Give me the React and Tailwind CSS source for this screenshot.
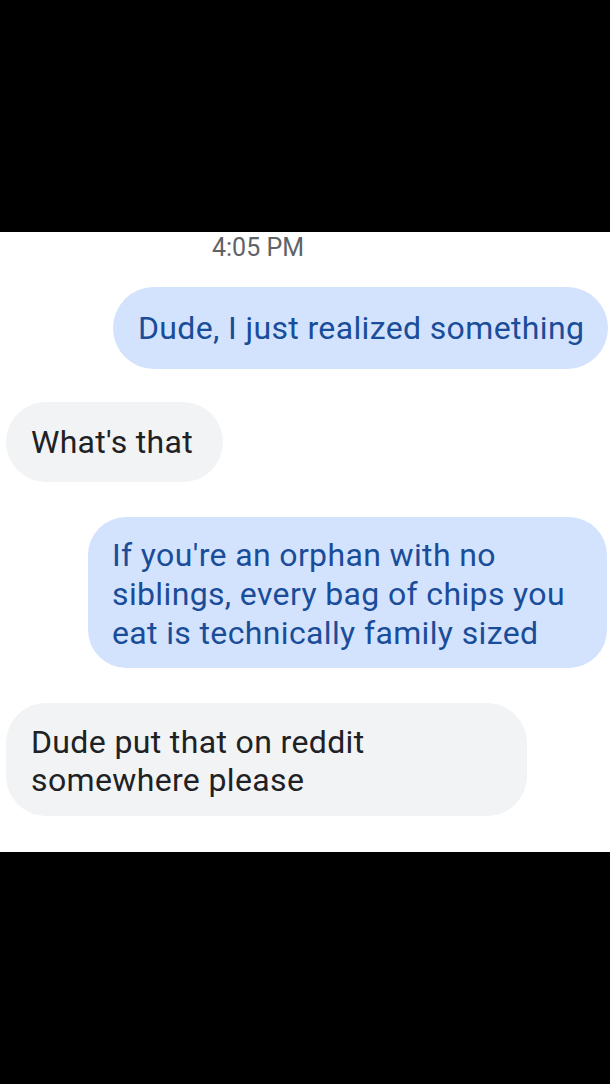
export default function App() {
  const font = { fontFamily: 'Roboto, "Noto Sans", sans-serif' };
  return (
    <div className="w-[610px] h-[1084px] bg-black flex flex-col" style={font}>
      <div className="h-[232px] bg-black shrink-0" />
      <div className="h-[620px] bg-white shrink-0 flex flex-col">
        <div className="pt-[1px] pl-[212px] text-[25px] leading-[29px] text-[#5f6368]">4:05 PM</div>
        <div className="mt-[25px] flex justify-end pr-[2px]">
          <div className="w-[495px] h-[82px] rounded-full bg-[#d3e3fd] flex items-center pl-[25px] text-[32px] leading-[38px] tracking-[0.36px] text-[#1a4d99] whitespace-nowrap">
            Dude, I just realized something
          </div>
        </div>
        <div className="mt-[33px] flex justify-start pl-[6px]">
          <div className="w-[217px] h-[80px] rounded-full bg-[#f1f3f4] flex items-center pl-[25px] text-[32px] leading-[38px] tracking-[0.3px] text-[#202124] whitespace-nowrap">
            What's that
          </div>
        </div>
        <div className="mt-[35px] flex justify-end pr-[3px]">
          <div className="w-[519px] h-[151px] rounded-[38px] bg-[#d3e3fd] flex flex-col justify-center pl-[24px] pt-[3px] text-[32px] leading-[39px] tracking-[0.36px] text-[#1a4d99] whitespace-nowrap">
            <span>If you're an orphan with no</span>
            <span>siblings, every bag of chips you</span>
            <span>eat is technically family sized</span>
          </div>
        </div>
        <div className="mt-[35px] flex justify-start pl-[6px]">
          <div className="w-[521px] h-[113px] rounded-[40px] bg-[#f1f3f4] flex flex-col justify-center pl-[25px] pt-[2px] text-[32px] leading-[38px] tracking-[0.36px] text-[#202124] whitespace-nowrap">
            <span>Dude put that on reddit</span>
            <span>somewhere please</span>
          </div>
        </div>
      </div>
      <div className="h-[232px] bg-black shrink-0" />
    </div>
  );
}
